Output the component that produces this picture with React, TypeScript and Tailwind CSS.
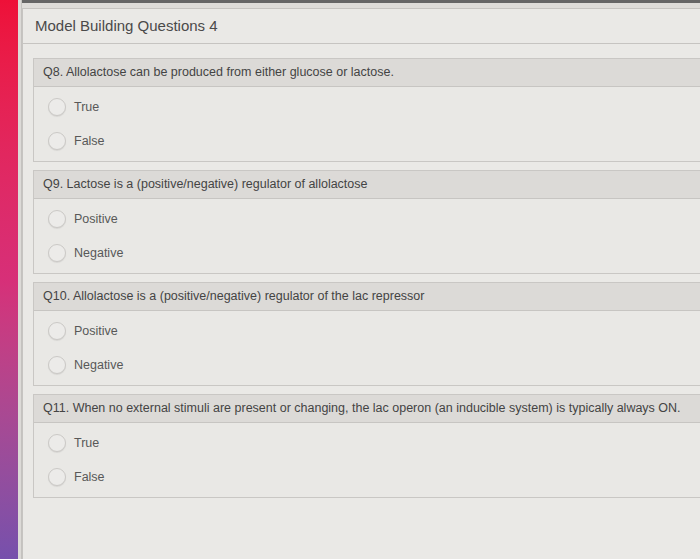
import React from 'react';

type Question = {
  id: string;
  text: string;
  options: string[];
};

const questions: Question[] = [
  { id: 'q8', text: 'Q8. Allolactose can be produced from either glucose or lactose.', options: ['True', 'False'] },
  { id: 'q9', text: 'Q9. Lactose is a (positive/negative) regulator of allolactose', options: ['Positive', 'Negative'] },
  { id: 'q10', text: 'Q10. Allolactose is a (positive/negative) regulator of the lac repressor', options: ['Positive', 'Negative'] },
  {
    id: 'q11',
    text: 'Q11. When no external stimuli are present or changing, the lac operon (an inducible system) is typically always ON.',
    options: ['True', 'False'],
  },
];

const QuestionBlock: React.FC<{ q: Question }> = ({ q }) => (
  <div className="border border-[#c9c7c4] bg-[#e9e8e5]">
    {/* question header */}
    <div className="h-[28px] flex items-center px-[9px] bg-[#dcdad7] border-b border-[#c7c5c2] text-[12.5px] text-[#444444] whitespace-nowrap">
      {q.text}
    </div>
    <div className="py-[3px]">
      {q.options.map((opt) => (
        <label key={opt} className="h-[34px] flex items-center pl-[14px] text-[12.5px] text-[#585858]">
          <span className="w-[18px] h-[18px] rounded-full border border-[#cbc9c6] bg-[#ecebe9] shadow-[0_1px_1px_rgba(0,0,0,0.08)]" />
          <span className="ml-[8px]">{opt}</span>
        </label>
      ))}
    </div>
  </div>
);

export default function App() {
  return (
    <div className="w-[700px] h-[559px] flex overflow-hidden bg-[#e9e8e5]" style={{ fontFamily: '"Liberation Sans", Arial, sans-serif' }}>
      {/* desktop edge */}
      <div className="w-[18px] shrink-0 bg-gradient-to-b from-[#ee1038] via-[#d72f78] to-[#7650ac]" />
      <div className="w-[4px] shrink-0 bg-[#dcdad7] border-r border-[#c4c2bf]" />

      <div className="flex-1 flex flex-col min-w-0">
        <div className="h-[3px] bg-[#666666]" />
        <div className="h-[5px] bg-[#dedcd9]" />

        <div className="flex-1 border-t border-l border-[#c6c4c1] bg-[#eae9e6] flex flex-col">
          {/* title */}
          <div className="h-[35px] flex items-center pl-[12px] border-b border-[#c6c4c1] text-[15px] text-[#4a4a4a] whitespace-nowrap">
            Model Building Questions 4
          </div>

          <div className="pl-[10px] pt-[14px] flex flex-col gap-[8px] -mr-[4px]">
            {questions.map((q) => (
              <QuestionBlock key={q.id} q={q} />
            ))}
          </div>
        </div>
      </div>
    </div>
  );
}
